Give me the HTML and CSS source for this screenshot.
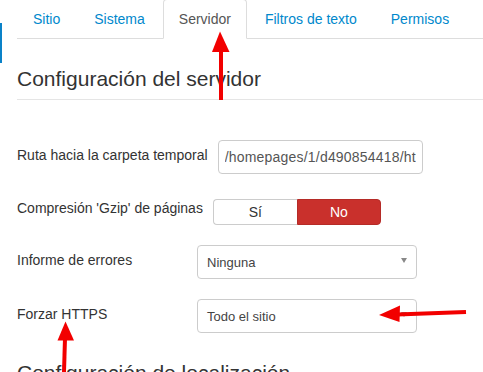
FILE: index.html
```html
<!DOCTYPE html>
<html lang="es">
<head>
<meta charset="utf-8">
<title>Configuración global</title>
<link rel="stylesheet" href="styles.css">
</head>
<body>
<div class="page">
  <aside class="sidebar"><span class="sidebar-active"></span></aside>
  <main class="main">
    <ul class="tabs">
      <li class="tab"><a href="#">Sitio</a></li>
      <li class="tab"><a href="#">Sistema</a></li>
      <li class="tab tab-active"><a href="#">Servidor</a></li>
      <li class="tab"><a href="#">Filtros de texto</a></li>
      <li class="tab"><a href="#">Permisos</a></li>
    </ul>
    <section class="tab-pane">
      <div class="fieldset fieldset-server">
        <h2 class="legend legend-server">Configuración del servidor</h2>
        <div class="fields">
          <div class="row">
            <label class="row-label">Ruta hacia la carpeta temporal</label>
            <input class="text-input" type="text" value="/homepages/1/d490854418/htdocs/tmp" readonly>
          </div>
          <div class="row">
            <label class="row-label row-label-toggle">Compresión 'Gzip' de páginas</label>
            <div class="toggle">
              <span class="toggle-btn toggle-yes">Sí</span>
              <span class="toggle-btn toggle-no">No</span>
            </div>
          </div>
          <div class="row">
            <label class="row-label">Informe de errores</label>
            <div class="select"><span class="select-text">Ninguna</span><span class="select-caret"></span></div>
          </div>
          <div class="row">
            <label class="row-label">Forzar HTTPS</label>
            <div class="select"><span class="select-text">Todo el sitio</span><span class="select-caret"></span></div>
          </div>
        </div>
      </div>
      <div class="fieldset">
        <h2 class="legend">Configuración de localización</h2>
      </div>
    </section>
  </main>
</div>
<svg class="annotations" width="483" height="372" viewBox="0 0 483 372" aria-hidden="true">
  <g fill="#f20000" stroke="#f20000" stroke-width="4">
    <line x1="221" y1="50" x2="221" y2="100"/>
    <polygon points="220,31.5 212,52 229.5,52" stroke="none"/>
    <line x1="397" y1="314.5" x2="466" y2="312"/>
    <polygon points="379,315 400,305.5 399.5,322" stroke="none"/>
    <line x1="65" y1="338" x2="64" y2="372"/>
    <polygon points="65.5,321.5 57.5,340.5 74,340.5" stroke="none"/>
  </g>
</svg>
</body>
</html>
```
FILE: styles.css
```css
html, body {
  margin: 0;
  padding: 0;
  overflow: hidden;
  background: #fff;
}

body {
  font-family: "Liberation Sans", Arial, sans-serif;
  font-size: 14px;
  color: #333;
}

.page {
  display: flex;
  height: 372px;
}

.sidebar {
  flex: 0 0 2px;
  padding-top: 23px;
}

.sidebar-active {
  display: block;
  height: 40px;
  background: #0a82c8;
}

.main {
  flex: 1;
  min-width: 0;
  padding-left: 15px;
}

/* Tabs */
.tabs {
  display: flex;
  list-style: none;
  margin: -1px 0 0;
  padding: 0;
  border-bottom: 1px solid #ddd;
}

.tab {
  margin-right: 2px;
  margin-bottom: -1px;
}

.tab a {
  display: block;
  padding: 9px 15px;
  line-height: 20px;
  border: 1px solid transparent;
  border-radius: 4px 4px 0 0;
  color: #0088cc;
  text-decoration: none;
  white-space: nowrap;
}

.tab-active a {
  color: #555;
  background: #fff;
  border-color: #ddd #ddd #fff;
}

/* Content */
.tab-pane {
  padding-top: 20px;
}

.fieldset-server {
  margin-bottom: 20px;
}

.legend {
  margin: 0;
  font-size: 21px;
  line-height: 40px;
  font-weight: normal;
  color: #333;
  border-bottom: 1px solid #e5e5e5;
  white-space: nowrap;
}

.legend-server {
  margin-bottom: 40px;
}

.fields {
  display: flex;
  flex-direction: column;
  gap: 20px;
}

.row {
  display: flex;
  align-items: flex-start;
}

.row-label {
  flex: 0 0 auto;
  min-width: 180px;
  box-sizing: border-box;
  padding: 5px 10px 0 0;
  line-height: 20px;
  white-space: nowrap;
  color: #333;
}

.row-label-toggle {
  padding-top: 4px;
}

.text-input {
  box-sizing: border-box;
  width: 205px;
  height: 34px;
  margin: 0;
  padding: 0 6px;
  border: 1px solid #ccc;
  border-radius: 4px;
  font-family: "Liberation Sans", Arial, sans-serif;
  font-size: 14px;
  letter-spacing: 0.2px;
  color: #555;
  background: #fff;
  outline: none;
}

.toggle {
  display: flex;
  margin-top: 5px;
}

.toggle-btn {
  box-sizing: border-box;
  width: 84px;
  height: 26px;
  line-height: 24px;
  text-align: center;
  font-size: 14px;
}

.toggle-yes {
  background: #fff;
  color: #333;
  border: 1px solid #ccc;
  border-right: none;
  border-radius: 4px 0 0 4px;
}

.toggle-no {
  background: #c9302c;
  color: #fff;
  border: 1px solid #b52b27;
  border-radius: 0 4px 4px 0;
}

.select {
  box-sizing: border-box;
  width: 220px;
  height: 34px;
  display: flex;
  align-items: center;
  justify-content: space-between;
  padding: 1px 9px 0 9px;
  border: 1px solid #ccc;
  border-radius: 4px;
  background: #fff;
  font-size: 13px;
  color: #444;
}

.select-caret {
  width: 0;
  height: 0;
  margin-bottom: 4px;
  border-left: 3.5px solid transparent;
  border-right: 3.5px solid transparent;
  border-top: 5px solid #888;
}

/* Annotation overlay */
.annotations {
  position: absolute;
  top: 0;
  left: 0;
  pointer-events: none;
}
```
